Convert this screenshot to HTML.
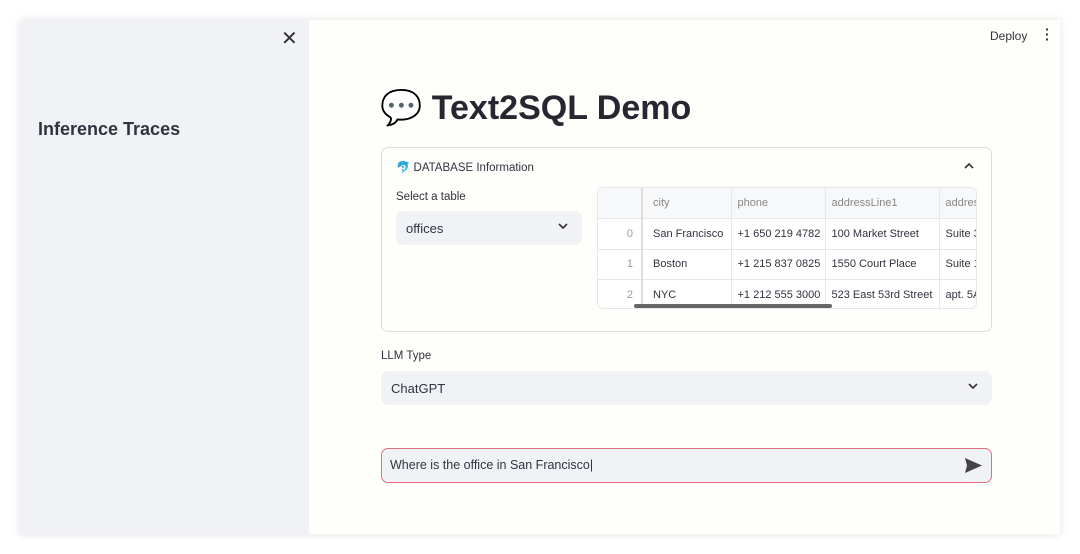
<!DOCTYPE html>
<html><head><style>
*{box-sizing:border-box;margin:0;padding:0}
body{width:1080px;height:554px;background:#fff;font-family:"Liberation Sans","DejaVu Sans",sans-serif;color:#31333f;position:relative;overflow:hidden}
.frame{position:absolute;left:20px;top:20px;width:1040px;height:514px;background:#fefefb;box-shadow:0 0 8px rgba(0,0,0,.12)}
.side{position:absolute;left:20px;top:20px;width:289px;height:514px;background:#f0f2f6}
.abs{position:absolute}
.sel{background:#f0f2f6;border-radius:7px}
table{border-collapse:collapse;font-size:11px;table-layout:fixed}
td{height:30.5px;border-top:1px solid #e6e7ea;border-left:1px solid #e6e7ea;padding-left:10px;white-space:nowrap;overflow:hidden}
.chev{position:absolute;right:14px;top:12px}
</style></head><body>
<div class="frame"></div>
<div class="side"></div>
<div class="abs" style="left:281px;top:26px;font-size:20px;color:#333">✕</div>
<div class="abs" style="left:38px;top:119px;font-size:18px;font-weight:bold;color:#31333f">Inference Traces</div>
<div class="abs" style="left:990px;top:29px;font-size:12px">Deploy</div>
<div class="abs" style="left:1045px;top:27px;font-size:14px;font-weight:bold;line-height:5px">·<br>·<br>·</div>
<div class="abs" style="left:380px;top:88px;font-size:34px;font-weight:bold;color:#262730">💬 Text2SQL Demo</div>
<div class="abs" style="left:381px;top:147px;width:611px;height:185px;border:1px solid #dcdde2;border-radius:7px"></div>
<div class="abs" style="left:396px;top:160px;font-size:11.5px">🐬 DATABASE Information</div>
<svg class="abs" style="left:964px;top:162px" width="10" height="7" viewBox="0 0 10 7"><path d="M1 6L5 2L9 6" stroke="#333" stroke-width="1.6" fill="none"/></svg>
<div class="abs" style="left:396px;top:191px;font-size:11.5px">Select a table</div>
<div class="abs sel" style="left:396px;top:211px;width:186px;height:34px;padding:10px;font-size:13px">offices<svg class="chev" width="10" height="7" viewBox="0 0 10 7"><path d="M1 1L5 5L9 1" stroke="#333" stroke-width="1.6" fill="none"/></svg></div>
<div class="abs" style="left:597px;top:187px;width:380px;height:122px;border:1px solid #e6e7ea;border-radius:6px;overflow:hidden;background:#fff">
<table style="width:420px">
<colgroup><col style="width:44px"><col style="width:89px"><col style="width:94px"><col style="width:114px"><col></colgroup>
<tr style="background:#f7f8fa;color:#888"><td style="border-top:0;border-left:0"></td><td style="border-top:0;border-left:2px solid #ddd">city</td><td style="border-top:0;padding-left:6px">phone</td><td style="border-top:0;padding-left:6px">addressLine1</td><td style="border-top:0;padding-left:6px">addres</td></tr>
<tr><td style="border-left:0;text-align:right;padding-right:8px;color:#999">0</td><td style="border-left:2px solid #ddd">San Francisco</td><td style="padding-left:6px">+1 650 219 4782</td><td style="padding-left:6px">100 Market Street</td><td style="padding-left:6px">Suite 3</td></tr>
<tr><td style="border-left:0;text-align:right;padding-right:8px;color:#999">1</td><td style="border-left:2px solid #ddd">Boston</td><td style="padding-left:6px">+1 215 837 0825</td><td style="padding-left:6px">1550 Court Place</td><td style="padding-left:6px">Suite 1</td></tr>
<tr><td style="border-left:0;text-align:right;padding-right:8px;color:#999">2</td><td style="border-left:2px solid #ddd">NYC</td><td style="padding-left:6px">+1 212 555 3000</td><td style="padding-left:6px">523 East 53rd Street</td><td style="padding-left:6px">apt. 5A</td></tr>
</table>
<div class="abs" style="left:36px;top:116px;width:198px;height:4px;border-radius:2px;background:#666"></div>
</div>
<div class="abs" style="left:381px;top:350px;font-size:11.5px">LLM Type</div>
<div class="abs sel" style="left:381px;top:371px;width:611px;height:34px;padding:10px;font-size:13px">ChatGPT<svg class="chev" width="10" height="7" viewBox="0 0 10 7"><path d="M1 1L5 5L9 1" stroke="#333" stroke-width="1.6" fill="none"/></svg></div>
<div class="abs" style="left:381px;top:448px;width:611px;height:35px;border:1px solid #e0707a;border-radius:7px;background:#f0f2f6;padding:9px 8px;font-size:12.5px">Where is the office in San Francisco|
<svg style="position:absolute;right:9px;top:9px" width="17" height="15" viewBox="0 0 17 15"><path d="M0 0L17 7.5L0 15L2 7.5Z" fill="#444"/></svg></div>
</body></html>
